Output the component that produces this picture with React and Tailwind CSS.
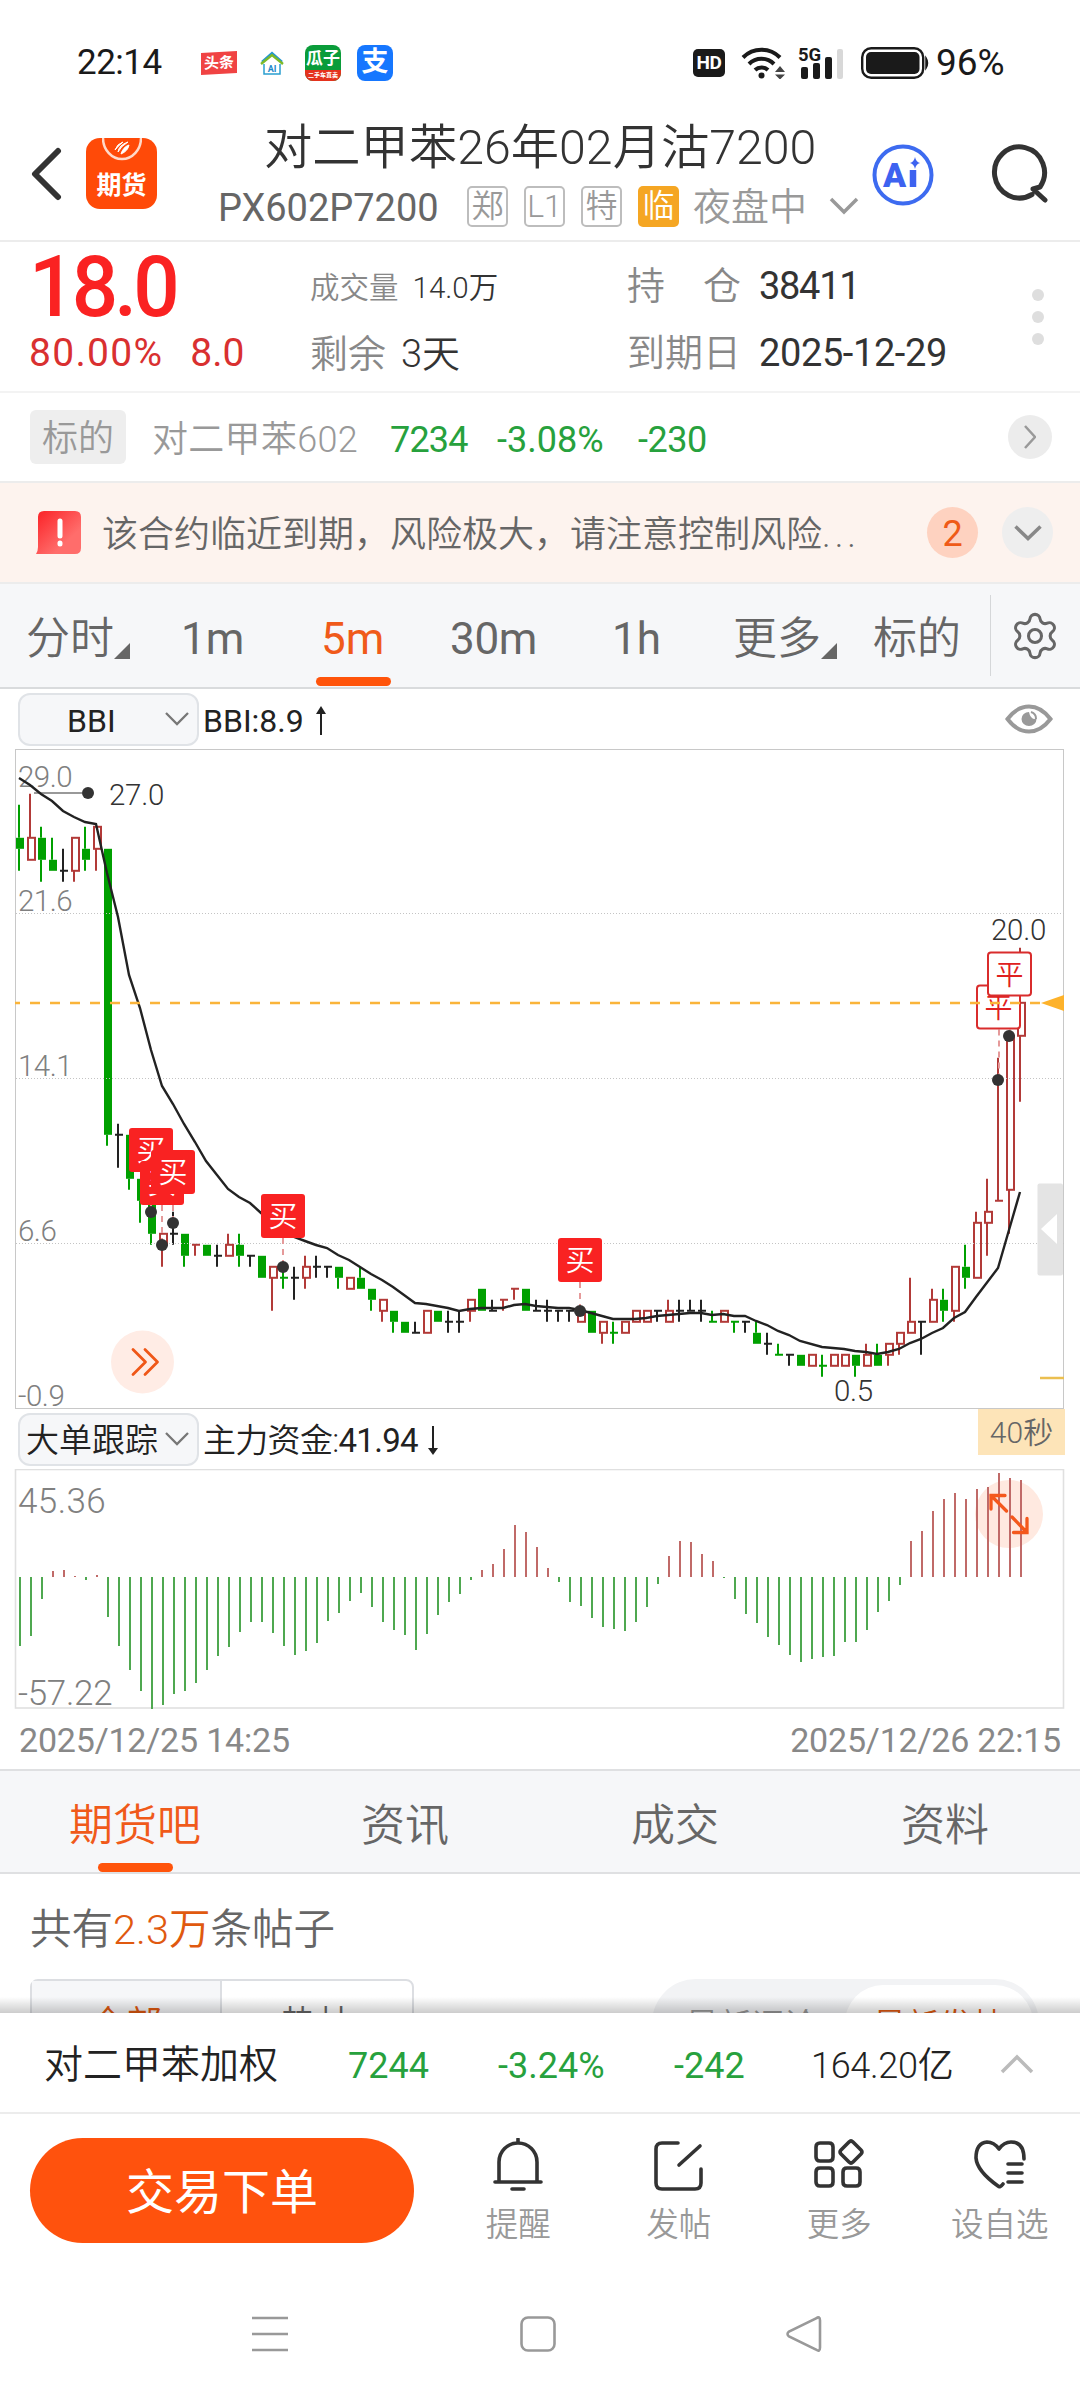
import { Settings } from 'lucide-react'

const X0 = 19
const STEP = 11

// g = green, r = red, k = flat: [color, high, top, bottom, low]
const CANDLES = [
  ['g', 26.5, 25, 24.5, 23.5], ['r', 27, 25, 24, 24], ['g', 25.5, 25, 24, 23], ['g', 25, 24, 23.5, 23.5],
  ['k', 24.5, 23.5, 23.5, 23], ['r', 25, 25, 23.5, 23], ['g', 25.5, 24.5, 24, 23.5], ['r', 25.5, 25.5, 24.5, 23.5],
  ['g', 24.5, 24.5, 11.5, 11], ['k', 12, 11.5, 11.5, 10], ['g', 11.5, 11.5, 9.5, 9], ['g', 9.5, 9.5, 8.5, 7.5],
  ['g', 8.5, 8.5, 7, 6.5], ['r', 7, 7, 6.5, 5.5], ['k', 8, 7, 7, 6.5], ['g', 7, 7, 6, 5.5],
  ['r', 6.5, 6.5, 6.5, 6], ['g', 6.5, 6.5, 6, 6], ['k', 6.5, 6, 6, 5.5], ['r', 7, 6.5, 6, 6],
  ['g', 7, 6.5, 6, 5.5], ['k', 6, 6, 6, 5.5], ['g', 6, 6, 5, 5], ['r', 5.5, 5.5, 5, 3.5],
  ['g', 5.5, 5, 5, 4.5], ['k', 5.5, 5, 5, 4], ['r', 6, 5.5, 5, 4.5], ['k', 6, 5.5, 5.5, 5],
  ['k', 5.5, 5.5, 5.5, 5], ['g', 5.5, 5.5, 5, 4.5], ['r', 5, 5, 4.5, 4.5], ['g', 5.5, 5, 4.5, 4.5],
  ['g', 4.5, 4.5, 4, 3.5], ['r', 4, 4, 3.5, 3], ['g', 3.5, 3.5, 3, 2.5], ['g', 3, 3, 2.5, 2.5],
  ['k', 3, 2.5, 2.5, 2.5], ['r', 3.5, 3.5, 2.5, 2.5], ['g', 3.5, 3.5, 3, 3], ['k', 3.5, 3, 3, 2.5],
  ['k', 3.5, 3, 3, 2.5], ['r', 4, 4, 3.5, 3], ['g', 4.5, 4.5, 3.5, 3.5], ['k', 4, 3.5, 3.5, 3.5],
  ['r', 4, 4, 4, 3.5], ['r', 4.5, 4.5, 4.5, 4], ['g', 4.5, 4.5, 3.5, 3.5], ['k', 4, 3.5, 3.5, 3.5],
  ['k', 4, 3.5, 3.5, 3], ['k', 3.5, 3.5, 3.5, 3], ['k', 3.5, 3.5, 3.5, 3], ['r', 3.5, 3.5, 3, 3],
  ['g', 3.5, 3.5, 2.5, 2.5], ['r', 3, 3, 2.5, 2], ['g', 3, 2.5, 2.5, 2], ['r', 3, 3, 2.5, 2.5],
  ['r', 3.5, 3.5, 3, 3], ['r', 3.5, 3.5, 3, 3], ['k', 3.5, 3.5, 3.5, 3], ['r', 4, 3.5, 3, 3],
  ['k', 4, 3.5, 3.5, 3], ['k', 4, 3.5, 3.5, 3.5], ['k', 4, 3.5, 3.5, 3], ['g', 3.5, 3, 3, 3],
  ['r', 3.5, 3.5, 3, 3], ['g', 3, 3, 3, 2.5], ['k', 3, 3, 3, 2.5], ['g', 3, 2.5, 2, 2],
  ['k', 2.5, 2, 2, 1.5], ['g', 2, 1.5, 1.5, 1.5], ['k', 1.5, 1.5, 1.5, 1], ['g', 1.5, 1.5, 1, 1],
  ['r', 1.5, 1.5, 1, 1], ['g', 1.5, 1, 1, 0.5], ['r', 1.5, 1.5, 1, 1], ['r', 1.5, 1.5, 1, 1],
  ['g', 1.5, 1.5, 1, 0.5], ['r', 2, 1.5, 1, 1], ['g', 2, 1.5, 1, 1], ['r', 2, 2, 1.5, 1],
  ['r', 2.5, 2.5, 2, 1.5], ['r', 5, 3, 2.5, 2.5], ['k', 3, 3, 3, 1.5], ['r', 4.5, 4, 3, 3],
  ['g', 4.5, 4, 3.5, 3], ['r', 5.5, 5.5, 3.5, 3], ['g', 6.5, 5.5, 5, 4.5], ['r', 8, 7.5, 5, 5],
  ['r', 9.5, 8, 7.5, 6], ['r', 15, 8.5, 8.5, 8.5], ['r', 16, 16, 9, 7], ['r', 20, 17.5, 16, 13],
]

const BBI =
  '19,778 30,785 41,794 52,801 63,811 74,817 85,822 96,824 107,873 118,917 129,975 140,1008 151,1050 162,1086 173,1104 184,1124 195,1142 206,1161 217,1175 228,1189 239,1197 250,1203 261,1213 272,1222 283,1231 294,1237 305,1241 316,1245 327,1248 338,1255 349,1260 360,1267 371,1274 382,1280 393,1287 404,1295 415,1303 426,1304 437,1306 448,1308 459,1311 470,1309 481,1308 503,1308 514,1305 525,1304 536,1306 558,1308 569,1308 580,1310 591,1313 613,1319 635,1319 646,1318 657,1316 668,1315 690,1313 701,1313 712,1315 723,1314 734,1316 745,1316 756,1321 767,1325 778,1331 789,1335 800,1341 822,1347 844,1349 855,1351 866,1352 877,1354 888,1352 899,1349 910,1343 921,1339 932,1333 943,1328 954,1318 965,1312 976,1297 998,1268 1009,1230 1020,1192'

// main fund flow, px from the zero line (positive = up)
const FLOW = [
  -69, -59, -22, 6, 7, 1, -3, 2, -40, -69, -93, -114, -132, -128, -117, -114, -106, -93, -79, -70,
  -55, -45, -45, -56, -69, -78, -74, -66, -44, -36, -24, -16, -30, -45, -53, -58, -73, -57, -38, -25,
  -17, -3, 7, 13, 28, 52, 45, 30, 9, -5, -25, -29, -41, -50, -52, -54, -45, -30, -7, 21,
  36, 35, 23, 16, -1, -22, -37, -46, -60, -68, -78, -85, -82, -80, -79, -65, -65, -53, -35, -24,
  -8, 36, 46, 66, 78, 84, 78, 88, 90, 104, 99, 97,
]

const COLORS = { g: '#00a000', r: '#b23a38', k: '#222222' }

const BUYS = [
  { x: 129, y: 1128, to: 1212 },
  { x: 140, y: 1161, to: 1245 },
  { x: 151, y: 1150, to: 1223 },
  { x: 261, y: 1194, to: 1267 },
  { x: 558, y: 1238, to: 1311 },
]

const CLOSES = [
  { x: 977, y: 985.5, to: 1080 },
  { x: 988, y: 952.5, to: 1036 },
]

const py = (p) => 793.8 + (27 - p) * 22

function Candle({ x, data }) {
  const [type, high, top, bottom, low] = data
  const c = COLORS[type]
  if (top === bottom) {
    return (
      <g stroke={c} strokeWidth="2">
        <path d={`M${x} ${py(high)}V${py(low)}M${x - 3} ${py(top)}h8`} />
      </g>
    )
  }
  return (
    <g stroke={c} strokeWidth="2">
      <path d={`M${x} ${py(high)}V${py(top)}M${x} ${py(bottom)}V${py(low)}`} />
      {type === 'r' ? (
        <rect x={x - 2} y={py(top)} width="7" height={py(bottom) - py(top)} fill="#fff" />
      ) : (
        <rect x={x - 3} y={py(top)} width="8" height={py(bottom) - py(top)} fill={c} stroke="none" />
      )}
    </g>
  )
}

function PriceChart() {
  return (
    <svg className="block h-[660px] w-full" viewBox="0 749 1080 660" fontFamily="Roboto, 'Noto Sans CJK SC', sans-serif" fontWeight="350">
      <rect x="15.5" y="749.5" width="1048" height="659" fill="#fff" stroke="#c8c8c8" />
      <g fontSize="29.5" fill="#808080" letterSpacing="-0.5">
        <text x="18" y="787">29.0</text>
        <text x="18" y="911">21.6</text>
        <text x="18" y="1076">14.1</text>
        <text x="18" y="1241">6.6</text>
        <text x="18" y="1406">-0.9</text>
      </g>
      <path d="M34 793H82" stroke="#999" strokeWidth="2" />
      <circle cx="88" cy="793" r="6" fill="#333" />

      {CANDLES.map((c, i) => (
        <Candle key={i} x={X0 + i * STEP} data={c} />
      ))}
      <path d="M16 913.5H1064M16 1078.5H1064M16 1243.5H1064" stroke="#c4c4c4" strokeDasharray="1 2" />
      <polyline points={BBI} fill="none" stroke="#222" strokeWidth="2.4" />

      {[...BUYS, ...CLOSES].map((m) => (
        <path key={m.x} d={`M${m.x + 22} ${m.y + 44}V${m.to}`} stroke="#e59a9a" strokeWidth="2" strokeDasharray="6 5" />
      ))}
      {BUYS.map((m) => (
        <g key={m.x}>
          <circle cx={m.x + 22} cy={m.to} r="6" fill="#333" />
          <rect x={m.x} y={m.y} width="44" height="44" rx="3" fill="#f92222" />
          <text x={m.x + 22} y={m.y + 33} textAnchor="middle" fontSize="29" fill="#fff">买</text>
        </g>
      ))}
      {CLOSES.map((m) => (
        <g key={m.x}>
          <circle cx={m.x + 21} cy={m.to} r="6" fill="#333" />
          <rect x={m.x} y={m.y} width="43" height="43" rx="3" fill="#fff" stroke="#d92c2c" strokeWidth="2" />
          <text x={m.x + 21.5} y={m.y + 32} textAnchor="middle" fontSize="28" fill="#e02020">平</text>
        </g>
      ))}

      <path d="M15 1003h5M30 1003H1041" stroke="#fab43a" strokeWidth="2.4" strokeDasharray="10 10" />
      <path d="M1041 1003l23-8v16z" fill="#fdb22b" />
      <path d="M1040 1378h24" stroke="#ebbf50" strokeWidth="2.5" />

      <g fontSize="29.5" fill="#333" letterSpacing="-0.3">
        <text x="109" y="805">27.0</text>
        <text x="991" y="940">20.0</text>
        <text x="834" y="1401">0.5</text>
      </g>

      <rect x="1037.500" y="1183.500" width="25.500" height="92" rx="2" fill="#e4e4e4" />
      <path d="M1041 1229l16-15v30z" fill="#fff" />

      <circle cx="142.500" cy="1362" r="31.500" fill="#ffece5" />
      <path d="M133 1349.500l12.500 12.500l-12.500 12.500M145 1349.500l12.500 12.500l-12.500 12.500" fill="none" stroke="#ef5718" strokeWidth="2.800" strokeLinecap="round" strokeLinejoin="round" />
    </svg>
  )
}

function FlowChart() {
  return (
    <svg className="block h-[240px] w-full" viewBox="0 1469 1080 240" fontFamily="Roboto, sans-serif" fontWeight="350">
      <rect x="15.500" y="1469.500" width="1048" height="238.500" fill="#fff" stroke="#e0e0e0" strokeWidth="1.600" />
      <g fontSize="35" fill="#808080">
        <text x="18" y="1513" letterSpacing="0.4">45.36</text>
        <text x="18" y="1705" letterSpacing="-0.3">-57.22</text>
      </g>
      <circle cx="1009" cy="1514" r="34" fill="#ffe9e0" />
      {FLOW.map((v, i) => (
        <path key={i} d={`M${X0 + 1 + i * STEP} 1577v${-v}`} stroke={v > 0 ? '#c06a68' : '#4fa850'} strokeWidth="2" />
      ))}
      <path
        d="M1006.500 1511L991 1495.500M1005 1495.500H991V1509M1012 1517L1027 1532.500M1013.500 1532.500H1027V1518.500"
        fill="none" stroke="#f4581c" strokeWidth="3.300" strokeLinecap="round"
      />
    </svg>
  )
}

function StatusBar() {
  return (
    <div className="flex h-[120px] items-center pt-[5px] pl-[77px] text-[#1a1a1a]">
      <span className="w-[124px] text-[35px] leading-none font-normal tracking-[-0.5px]">22:14</span>
      <span className="flex h-[22px] w-9 -skew-y-3 items-center justify-center bg-[#f04343] text-[15px] leading-none font-bold text-white">头条</span>
      <svg className="ml-[23px] h-6 w-6" viewBox="0 0 24 24" fill="none">
        <path d="M2 11L12 2l10 9" stroke="#2196d3" strokeWidth="2.400" />
        <path d="M1 13L12 4l11 9" stroke="#7cb928" strokeWidth="2.400" />
        <path d="M4 13v10h16V13" stroke="#2a9fd0" strokeWidth="1.500" />
        <text x="12" y="20.500" fontSize="9" fontWeight="700" textAnchor="middle" fill="#1b87c9">AI</text>
      </svg>
      <span className="ml-[21px] flex h-9 w-9 flex-col overflow-hidden rounded-lg bg-[#0a9c3a] text-center font-bold text-white">
        <span className="h-[25px] text-[17px] leading-[26px]">瓜子</span>
        <span className="h-[11px] bg-[#e5321d] text-[6px] leading-[10px]">二手车直卖</span>
      </span>
      <span className="ml-4 flex h-9 w-9 items-center justify-center rounded-lg bg-[#1677ff] text-[27px] leading-none font-bold text-white">支</span>
      <span className="ml-[300px] flex h-7 w-8 items-center justify-center rounded-[5px] bg-[#1a1a1a] text-[19px] leading-none font-bold tracking-[-0.5px] text-white">HD</span>
      <svg className="ml-[16px] h-8 w-[46px]" viewBox="0 0 46 32" fill="none">
        <path d="M2 10.500a26 26 0 0 1 37 0" stroke="#1a1a1a" strokeWidth="4" />
        <path d="M8 17a17.500 17.500 0 0 1 25 0" stroke="#1a1a1a" strokeWidth="4" />
        <path d="M14 23a9.500 9.500 0 0 1 13 0" stroke="#1a1a1a" strokeWidth="4" />
        <circle cx="20.500" cy="28.500" r="3" fill="#1a1a1a" />
        <path d="M34 25l5-6l5 6zM34 27.500l5 5l5-5z" fill="#444" />
      </svg>
      <svg className="ml-[11px] h-8 w-[48px] overflow-visible" viewBox="0 0 48 32">
        <text x="0" y="14" fontSize="18.500" fontWeight="700" textLength="23" fill="#1a1a1a">5G</text>
        <rect x="3" y="20" width="7" height="12" rx="2" fill="#1a1a1a" />
        <rect x="15" y="16" width="7" height="16" rx="2" fill="#1a1a1a" />
        <rect x="27" y="10" width="7" height="22" rx="2" fill="#1a1a1a" />
        <rect x="39" y="2" width="6" height="30" rx="2" fill="#d8d8d8" />
      </svg>
      <svg className="ml-[15px] h-8 w-[68px]" viewBox="0 0 68 32">
        <rect x="1.200" y="1.200" width="61" height="29.600" rx="9" fill="none" stroke="#1a1a1a" strokeWidth="2.400" />
        <rect x="5" y="5" width="53.500" height="22" rx="5" fill="#1a1a1a" />
        <path d="M65 11q3 5 0 10z" fill="#1a1a1a" stroke="#1a1a1a" strokeWidth="1.500" />
      </svg>
      <span className="ml-[7px] text-[37px] leading-none font-normal">96%</span>
    </div>
  )
}

function Header() {
  return (
    <div className="flex h-[122px] border-b-2 border-[#ececec]">
      <div className="flex w-[218px] pl-[30px]">
        <svg className="mt-[27px] h-[54px] w-8" viewBox="0 0 32 54" fill="none">
          <path d="M28 4L5 27L28 50" stroke="#333" strokeWidth="6" strokeLinecap="round" strokeLinejoin="round" />
        </svg>
        <div className="relative mt-[18px] ml-6 flex h-[71px] w-[71px] items-end justify-center rounded-[14px] bg-[#ff4a08]">
          <svg className="absolute top-0 left-4 h-6 w-10" viewBox="0 0 40 24" fill="none">
            <path d="M1 0a19 21 0 0 0 38 0" stroke="#ffd9c9" strokeWidth="2.500" />
            <path d="M13 12q2-6 8-8q-5 4-8 8M16 14q1-7 10-10q-7 4-10 10M19 16q2-7 8-9q-1 6-8 9" fill="#fff" stroke="#fff" />
          </svg>
          <span className="mb-[10px] text-[25px] leading-[26px] font-bold text-white">期货</span>
        </div>
      </div>
      <div className="flex w-[643px] flex-col">
        <div className="mt-0.5 pl-[46px] text-[48.300px] leading-[52px] whitespace-nowrap text-[#333]">对二甲苯26年02月沽7200</div>
        <div className="mt-[7px] flex h-[50px] items-center text-[38px] leading-none">
          <span className="w-[249px] pt-1 font-normal text-[#666]">PX602P7200</span>
          <div className="flex gap-4 text-[32px] text-[#999]">
            {['郑', 'L1', '特'].map((t) => (
              <span key={t} className="flex h-[41px] w-[41px] items-center justify-center rounded-[5px] border-2 border-[#bdbdbd]">{t}</span>
            ))}
            <span className="flex h-[41px] w-[41px] items-center justify-center rounded-[5px] bg-[#f5a623] text-white">临</span>
          </div>
          <span className="ml-3.5 pt-0.5 text-[#999]">夜盘中</span>
          <svg className="ml-[21px] h-5 w-8 shrink-0" viewBox="0 0 32 20" fill="none">
            <path d="M3 3l13 13L29 3" stroke="#999" strokeWidth="3.500" />
          </svg>
        </div>
      </div>
      <svg className="mt-[24px] ml-[11px] h-[62px] w-[62px]" viewBox="0 0 62 62" fill="none">
        <circle cx="31" cy="31" r="28.500" stroke="#3d6bf0" strokeWidth="4" />
        <text x="11" y="43" fontSize="34" fontWeight="900" fill="#3d62f0">A</text>
        <path d="M41 26v17" stroke="#3d62f0" strokeWidth="6.500" />
        <path d="M43 13q1 5 5 6q-4 1-5 6q-1-5-5-6q4-1 5-6" fill="#3d62f0" />
      </svg>
      <svg className="mt-[23px] ml-[56px] h-16 w-16" viewBox="0 0 64 64" fill="none">
        <path d="M42 51.500A25 25.500 0 1 1 50 44L43 46L55 57" stroke="#333" strokeWidth="5" strokeLinecap="round" strokeLinejoin="round" />
      </svg>
    </div>
  )
}

function Quote() {
  return (
    <div className="flex h-[151px] border-b-2 border-[#f3f3f3] text-[38px] leading-none text-[#333]">
      <div className="w-[310px] pl-[29px] text-[#d93030]">
        <div className="h-[88px] origin-left scale-x-95 text-[86px] leading-[90px] font-medium tracking-[-4px] text-[#fa2222]">18.0</div>
        <div className="mt-[3px] flex h-[40px] items-center gap-[27px] text-[39px] font-normal">
          <span className="tracking-[1.300px]">80.00%</span>
          <span>8.0</span>
        </div>
      </div>
      <div className="w-[317px] pt-[25px]">
        <div className="flex h-[44px] items-center text-[29.500px]">
          <span className="mr-[14px] text-[#888]">成交量</span>
          <span>14.0万</span>
        </div>
        <div className="mt-[21px] flex h-[44px] items-center">
          <span className="mr-[15px] text-[#888]">剩余</span>
          <span>3天</span>
        </div>
      </div>
      <div className="w-[402px] pt-[22px]">
        <div className="flex h-[44px] items-center">
          <span className="mr-[18px] flex w-[114px] justify-between text-[#888]"><i className="not-italic">持</i><i className="not-italic">仓</i></span>
          <span className="font-normal tracking-[-1.300px]">38411</span>
        </div>
        <div className="mt-[23px] flex h-[44px] items-center">
          <span className="mr-[18px] text-[#888]">到期日</span>
          <span className="font-normal tracking-[-0.400px]">2025-12-29</span>
        </div>
      </div>
      <div className="flex flex-col gap-[10px] pt-[47px] pl-[3px]">
        <i className="h-3 w-3 rounded-full bg-[#dedede]" />
        <i className="h-3 w-3 rounded-full bg-[#dedede]" />
        <i className="h-3 w-3 rounded-full bg-[#dedede]" />
      </div>
    </div>
  )
}

function Underlying() {
  return (
    <div className="flex h-[90px] items-center border-b-2 border-[#ececec] pr-7 pl-[30px] text-[36px] leading-none">
      <span className="flex h-[54px] w-[96px] items-center justify-center rounded-md bg-[#eee] pt-[3px] text-[#999]">标的</span>
      <span className="ml-[26px] w-[238px] pt-[5px] tracking-[0.300px] text-[#999]">对二甲苯602</span>
      <span className="w-[107px] pt-[5px] font-normal tracking-[-0.800px] text-[#27a13d]">7234</span>
      <span className="w-[141px] pt-[5px] font-normal text-[#27a13d]">-3.08%</span>
      <span className="pt-[5px] font-normal tracking-[-0.500px] text-[#27a13d]">-230</span>
      <span className="ml-auto flex h-11 w-11 items-center justify-center rounded-full bg-[#ececec]">
        <svg className="h-6 w-3" viewBox="0 0 12 24" fill="none">
          <path d="M1 1l10 11L1 23" stroke="#999" strokeWidth="2.500" />
        </svg>
      </span>
    </div>
  )
}

function Warning() {
  return (
    <div className="flex h-[101px] items-center border-b-2 border-[#ececec] bg-[#fdf3ee] pr-[27px] pl-9 text-[36px] leading-none text-[#666]">
      <svg className="h-[43px] w-[46px]" viewBox="0 0 46 43">
        <defs>
          <linearGradient id="alert" x1="0" y1="0" x2="1" y2="1">
            <stop offset="0.1" stopColor="#fb2b2f" />
            <stop offset="0.7" stopColor="#ff6d6b" />
          </linearGradient>
        </defs>
        <path d="M8 0h31q6 0 6 6v31q0 6-6 6H0q2-3 2-7V6q0-6 6-6" fill="url(#alert)" />
        <path d="M24 10v15M24 32v1" stroke="#fff" strokeWidth="5" strokeLinecap="round" />
      </svg>
      <span className="ml-5 pt-1 whitespace-nowrap">该合约临近到期，风险极大，请注意控制风险<span className="tracking-[4px]">...</span></span>
      <span className="ml-auto flex h-[51px] w-[51px] items-center justify-center rounded-full bg-[#fed2c0] pt-0.5 font-normal text-[#ef5a17]">2</span>
      <span className="ml-6 flex h-[51px] w-[51px] items-center justify-center rounded-full bg-[#eee]">
        <svg className="h-4 w-7" viewBox="0 0 28 16" fill="none">
          <path d="M1.500 1.500L14 13.500L26.500 1.500" stroke="#888" strokeWidth="3.500" />
        </svg>
      </span>
    </div>
  )
}

function Corner() {
  return (
    <svg className="mt-[25px] h-4 w-4" viewBox="0 0 16 16">
      <path d="M16 0v16H0z" fill="#666" />
    </svg>
  )
}

function PeriodTabs() {
  return (
    <div className="flex h-[105px] items-center border-b-2 border-[#d9dbdd] bg-[#f6f7f9] pl-[26px] text-[44px] leading-none text-[#666]">
      <span className="flex w-[155px] items-center pt-[6px]">分时<Corner /></span>
      <span className="w-[140px] pt-[6px] font-normal">1m</span>
      <span className="relative w-[129px] pt-[6px] font-normal text-[#f05a1a]">
        5m
        <i className="absolute top-[66px] left-[-5px] h-[9px] w-[75px] rounded-full bg-[#ff540b]" />
      </span>
      <span className="w-[162px] pt-[6px] font-normal tracking-[-0.300px]">30m</span>
      <span className="w-[121px] pt-[6px] font-normal">1h</span>
      <span className="flex w-[140px] items-center pt-[6px]">更多<Corner /></span>
      <span className="w-[117px] pt-[6px]">标的</span>
      <i className="h-[81px] w-px bg-[#d5d7d9]" />
      <Settings className="ml-[18px] h-[52px] w-[52px] text-[#666]" strokeWidth={1.4} />
    </div>
  )
}

function Select({ children, center }) {
  return (
    <div className={`flex h-[53px] w-[181px] items-center rounded-xl border-2 border-[#e0e3e7] bg-[#f6f7f9] pr-[8px] ${center ? 'pl-[47px]' : 'pl-[6px]'}`}>
      <span className="pt-[3px]">{children}</span>
      <svg className="ml-auto h-[14px] w-6" viewBox="0 0 24 14" fill="none">
        <path d="M1 1l11 11L23 1" stroke="#777" strokeWidth="2.300" />
      </svg>
    </div>
  )
}

function IndicatorRow() {
  return (
    <div className="flex h-[60px] items-center pr-[27px] pl-[18px] text-[32px] leading-none font-normal text-[#222]">
      <Select center>BBI</Select>
      <span className="ml-1 w-[110px] pt-[3px]">BBI:8.9</span>
      <svg className="mt-[3px] h-[30px] w-4" viewBox="0 0 16 30">
        <path d="M8 29V4" stroke="#222" strokeWidth="2" />
        <path d="M8 0l5 8H3z" fill="#222" />
      </svg>
      <svg className="ml-auto h-[30px] w-[48px]" viewBox="0 0 48 30" fill="none">
        <path d="M2.500 15Q12 2.500 24 2.500T45.500 15Q36 27.500 24 27.500T2.500 15z" stroke="#999" strokeWidth="4" />
        <path d="M24 8a7.500 7 0 1 0 7.500 7q-6 1-7.500-7" fill="#999" />
        <path d="M26 8a7 7 0 0 1 5 7" stroke="#999" strokeWidth="2" />
      </svg>
    </div>
  )
}

function FlowRow() {
  return (
    <div className="flex h-[60px] items-center pr-[15px] pl-[18px] text-[33px] leading-none text-[#222]">
      <Select>大单跟踪</Select>
      <span className="ml-1 w-[222px] pt-[3px] tracking-[-0.700px]">主力资金:<span className="font-normal">41.94</span></span>
      <svg className="mt-0.5 h-[30px] w-4" viewBox="0 0 16 30">
        <path d="M8 1v25" stroke="#222" strokeWidth="2" />
        <path d="M8 30l5-7H3z" fill="#222" />
      </svg>
      <span className="ml-auto flex h-[46px] w-[87px] items-center justify-center self-start bg-[#fde4b8] pt-0.5 text-[30px] text-[#666]">40秒</span>
    </div>
  )
}

function Posts() {
  return (
    <div className="relative h-[139px] overflow-hidden">
      <div className="px-[30px] pt-[34px] text-[41.500px] leading-[44px] text-[#666]">
        共有<span className="text-[#e0590f]">2.3万</span>条帖子
      </div>
      <div className="mt-[27px] flex justify-between pr-[41px] pl-[30px] leading-none">
        <div className="flex h-[88px] w-[384px] rounded-lg border-2 border-[#dcdee2] text-[36px]">
          <span className="flex w-1/2 items-center justify-center border-r-2 border-[#dcdee2] bg-[#f6f7f9] pt-1 text-[#e0590f]">全部</span>
          <span className="flex w-1/2 items-center justify-center pt-1 text-[#666]">热帖</span>
        </div>
        <div className="flex h-[88px] w-[387px] rounded-full bg-[#f2f3f5] p-1.5 text-[33px]">
          <span className="flex w-[187px] items-center justify-center pt-1 text-[#999]">最新评论</span>
          <span className="flex w-[188px] items-center justify-center rounded-full bg-white pt-1 text-[#e0590f]">最新发帖</span>
        </div>
      </div>
      <i className="absolute inset-x-0 bottom-0 h-4 bg-gradient-to-b from-transparent to-black/20" />
    </div>
  )
}

function IndexBar() {
  return (
    <div className="flex h-[101px] items-center border-b-2 border-[#ececec] bg-white pl-[44px] text-[36px] leading-none text-[#222]">
      <span className="w-[304px] pt-[6px] text-[39px]">对二甲苯加权</span>
      <span className="w-[150px] pt-[6px] font-normal text-[#27a13d]">7244</span>
      <span className="w-[176px] pt-[6px] font-normal text-[#27a13d]">-3.24%</span>
      <span className="w-[137px] pt-[6px] font-normal text-[#27a13d]">-242</span>
      <span className="w-[189px] pt-[6px] tracking-[-0.300px]">164.20亿</span>
      <svg className="mt-0.5 h-5 w-[34px]" viewBox="0 0 34 20" fill="none">
        <path d="M2 18L17 3l15 15" stroke="#bbb" strokeWidth="3.500" />
      </svg>
    </div>
  )
}

const ACTIONS = [
  {
    label: '提醒',
    icon: <path d="M7 44V24a19 19 0 0 1 38 0v20M3 44h46M26 5V1M20 51h12" />,
  },
  {
    label: '发帖',
    icon: <path d="M25 5H9q-6 0-6 6v34q0 6 6 6h33q6 0 6-6V31M47 8L26 27" />,
  },
  {
    label: '更多',
    icon: (
      <path d="M7 5h9q4 0 4 4v10q0 4-4 4H7q-4 0-4-4V9q0-4 4-4M7 30h9q4 0 4 4v10q0 4-4 4H7q-4 0-4-4V34q0-4 4-4M34 30h9q4 0 4 4v10q0 4-4 4H34q-4 0-4-4V34q0-4 4-4M36 4q2-2 4 0l8 8q2 2 0 4l-8 8q-2 2-4 0l-8-8q-2-2 0-4z" />
    ),
  },
  {
    label: '设自选',
    icon: <path d="M50 21Q50 4 37 4Q30 4 25 11Q20 4 13 4Q2 5 2 20Q3 33 24 48q2 2 5-2M34 26h14M34 35h14M34 44h14" />,
  },
]

function ActionBar() {
  return (
    <div className="flex h-[166px] bg-white pl-[30px]">
      <button className="mt-6 flex h-[105px] w-[384px] items-center justify-center rounded-full bg-[#ff520d] pt-[5px] text-[48px] leading-none font-normal text-white">交易下单</button>
      <div className="ml-[24px] flex flex-1">
        {ACTIONS.map((a) => (
          <div key={a.label} className="flex flex-1 flex-col items-center">
            <svg className="mt-6 h-[54px] w-[52px]" viewBox="0 0 52 54" fill="none" stroke="#333" strokeWidth="3.600" strokeLinecap="round" strokeLinejoin="round">
              {a.icon}
            </svg>
            <span className="mt-[15px] text-[32.500px] leading-[36px] text-[#999]">{a.label}</span>
          </div>
        ))}
      </div>
    </div>
  )
}

function SystemNav() {
  return (
    <div className="flex h-[120px] bg-white pt-9 pl-[252px]">
      <svg className="h-[36px] w-[570px]" viewBox="0 0 570 36" fill="none" stroke="#999" strokeWidth="2.600">
        <path d="M0 2h36M0 18h36M0 34h36" />
        <rect x="269.500" y="1.500" width="33" height="33" rx="6.500" />
        <path d="M564 2.500q4-3 4 2v27q0 5-4 2L537 20.500q-3-2.500 0-5z" />
      </svg>
    </div>
  )
}

export default function App() {
  return (
    <div className="h-[2400px] w-[1080px] overflow-hidden bg-white font-['Roboto','Noto_Sans_CJK_SC',sans-serif] font-[350]">
      <StatusBar />
      <Header />
      <Quote />
      <Underlying />
      <Warning />
      <PeriodTabs />
      <IndicatorRow />
      <PriceChart />
      <FlowRow />
      <FlowChart />
      <div className="flex h-[60px] items-center justify-between px-[19px] pt-0.5 text-[34px] leading-none font-normal tracking-[-0.200px] text-[#888]">
        <span>2025/12/25 14:25</span>
        <span>2025/12/26 22:15</span>
      </div>
      <div className="flex h-[105px] items-center border-y-2 border-[#dfe0e2] bg-[#f6f7f9] text-[44px] leading-none text-[#666]">
        <span className="relative flex flex-1 justify-center pt-[8px] text-[#f05a1a]">
          期货吧
          <i className="absolute top-[67px] h-[9px] w-[75px] rounded-full bg-[#ff540b]" />
        </span>
        <span className="flex flex-1 justify-center pt-[8px]">资讯</span>
        <span className="flex flex-1 justify-center pt-[8px]">成交</span>
        <span className="flex flex-1 justify-center pt-[8px]">资料</span>
      </div>
      <Posts />
      <IndexBar />
      <ActionBar />
      <SystemNav />
    </div>
  )
}
